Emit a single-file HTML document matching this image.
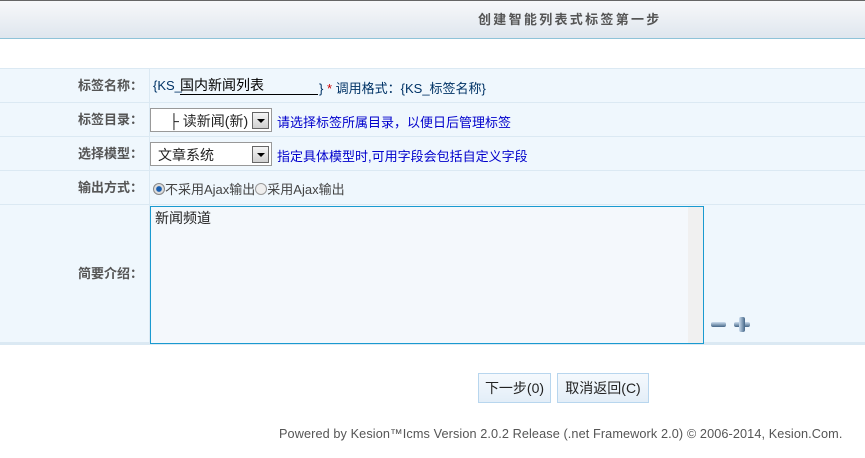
<!DOCTYPE html>
<html><head><meta charset="utf-8"><style>
*{margin:0;padding:0;box-sizing:border-box}
body{width:865px;height:458px;background:#fff;position:relative;font-family:"Liberation Sans","Noto Sans CJK SC",sans-serif;font-size:13px;color:#333;overflow:hidden}
.abs{position:absolute}
.hd{left:0;top:0;width:865px;height:39px;background:linear-gradient(#f7f8fa,#dfe6ee);border-top:1px solid #666;border-bottom:1px solid #8fc3d8}
.hd span{position:absolute;left:478px;top:8px;font-size:13px;color:#555;letter-spacing:2.3px;font-weight:bold}
.row{left:0;width:865px;background:#eff7fd;border-bottom:1px solid #dbe9f3}
.lab{position:absolute;left:0;width:150px;text-align:right;padding-right:6px;font-weight:bold;color:#555;font-size:13px;border-right:1px solid #dbe9f3;height:100%}
.sel{position:absolute;background:#fff;border:1px solid #999;height:24px;font-size:14px;color:#222}
.arr{position:absolute;right:2px;top:3px;width:17px;height:17px;border:1px solid #666;background:linear-gradient(#f5f5f5,#d0d0d0)}
.arr:after{content:"";position:absolute;left:4px;top:6px;border:4px solid transparent;border-top:4px solid #000}
.blue{color:#00c;font-size:13px}
.btn{position:absolute;top:373px;height:30px;border:1px solid #b8d6ee;background:linear-gradient(#f5f9fd,#e3eef8);font-size:14px;color:#222;text-align:center;line-height:28px}
</style></head><body>
<div class="abs hd"><span>创建智能列表式标签第一步</span></div>
<div class="abs row" style="top:68px;height:35px;border-top:1px solid #dbe9f3"><div class="lab" style="line-height:34px">标签名称：</div>
<span class="abs" style="left:153px;top:9px;color:#036">{KS_</span>
<span class="abs" style="left:180px;top:6px;width:138px;border-bottom:1px solid #000;font-size:14px;color:#000;height:20px">国内新闻列表</span>
<span class="abs" style="left:319px;top:9px;color:#036">} <span style="color:#c00">*</span> 调用格式：{KS_标签名称}</span></div>
<div class="abs row" style="top:103px;height:34px"><div class="lab" style="line-height:33px">标签目录：</div>
<div class="sel" style="left:150px;top:5px;width:122px"><span style="position:absolute;left:18px;top:2px">├ 读新闻(新)</span><div class="arr"></div></div>
<span class="abs blue" style="left:277px;top:9px">请选择标签所属目录，以便日后管理标签</span></div>
<div class="abs row" style="top:137px;height:34px"><div class="lab" style="line-height:33px">选择模型：</div>
<div class="sel" style="left:150px;top:5px;width:122px"><span style="position:absolute;left:7px;top:2px">文章系统</span><div class="arr"></div></div>
<span class="abs blue" style="left:277px;top:9px">指定具体模型时,可用字段会包括自定义字段</span></div>
<div class="abs row" style="top:171px;height:34px"><div class="lab" style="line-height:33px">输出方式：</div>
<span class="abs" style="left:153px;top:8px;color:#444"><span style="display:inline-block;width:12px;height:12px;border-radius:50%;background:radial-gradient(#1a5fb0 35%,#ddd 45%);border:1px solid #888;vertical-align:-1px"></span>不采用Ajax输出<span style="display:inline-block;width:12px;height:12px;border-radius:50%;background:#eee;border:1px solid #999;vertical-align:-1px"></span>采用Ajax输出</span></div>
<div class="abs row" style="top:205px;height:140px;border-bottom:3px solid #dbe9f3"><div class="lab" style="line-height:137px">简要介绍：</div>
<div class="abs" style="left:150px;top:1px;width:554px;height:138px;border:1px solid #1a9ad0;background:#f4f8fc;font-size:14px;color:#222;padding:1px 4px">新闻频道
<div class="abs" style="right:0;top:0;width:15px;height:136px;background:#f0f0f0"></div></div>
<div class="abs" style="left:711px;top:117px;width:15px;height:5px;background:linear-gradient(#cde,#468);border-radius:2px"></div>
<div class="abs" style="left:734px;top:117px;width:16px;height:5px;background:linear-gradient(#cde,#468);border-radius:2px"></div>
<div class="abs" style="left:739px;top:112px;width:6px;height:15px;background:linear-gradient(90deg,#cde,#468);border-radius:2px"></div></div>
<div class="btn" style="left:478px;width:73px">下一步(0)</div>
<div class="btn" style="left:557px;width:92px">取消返回(C)</div>
<div class="abs" style="left:279px;top:427px;font-size:12.7px;color:#555;letter-spacing:0.1px">Powered by Kesion™Icms Version 2.0.2 Release (.net Framework 2.0) © 2006-2014, Kesion.Com.</div>
</body></html>
